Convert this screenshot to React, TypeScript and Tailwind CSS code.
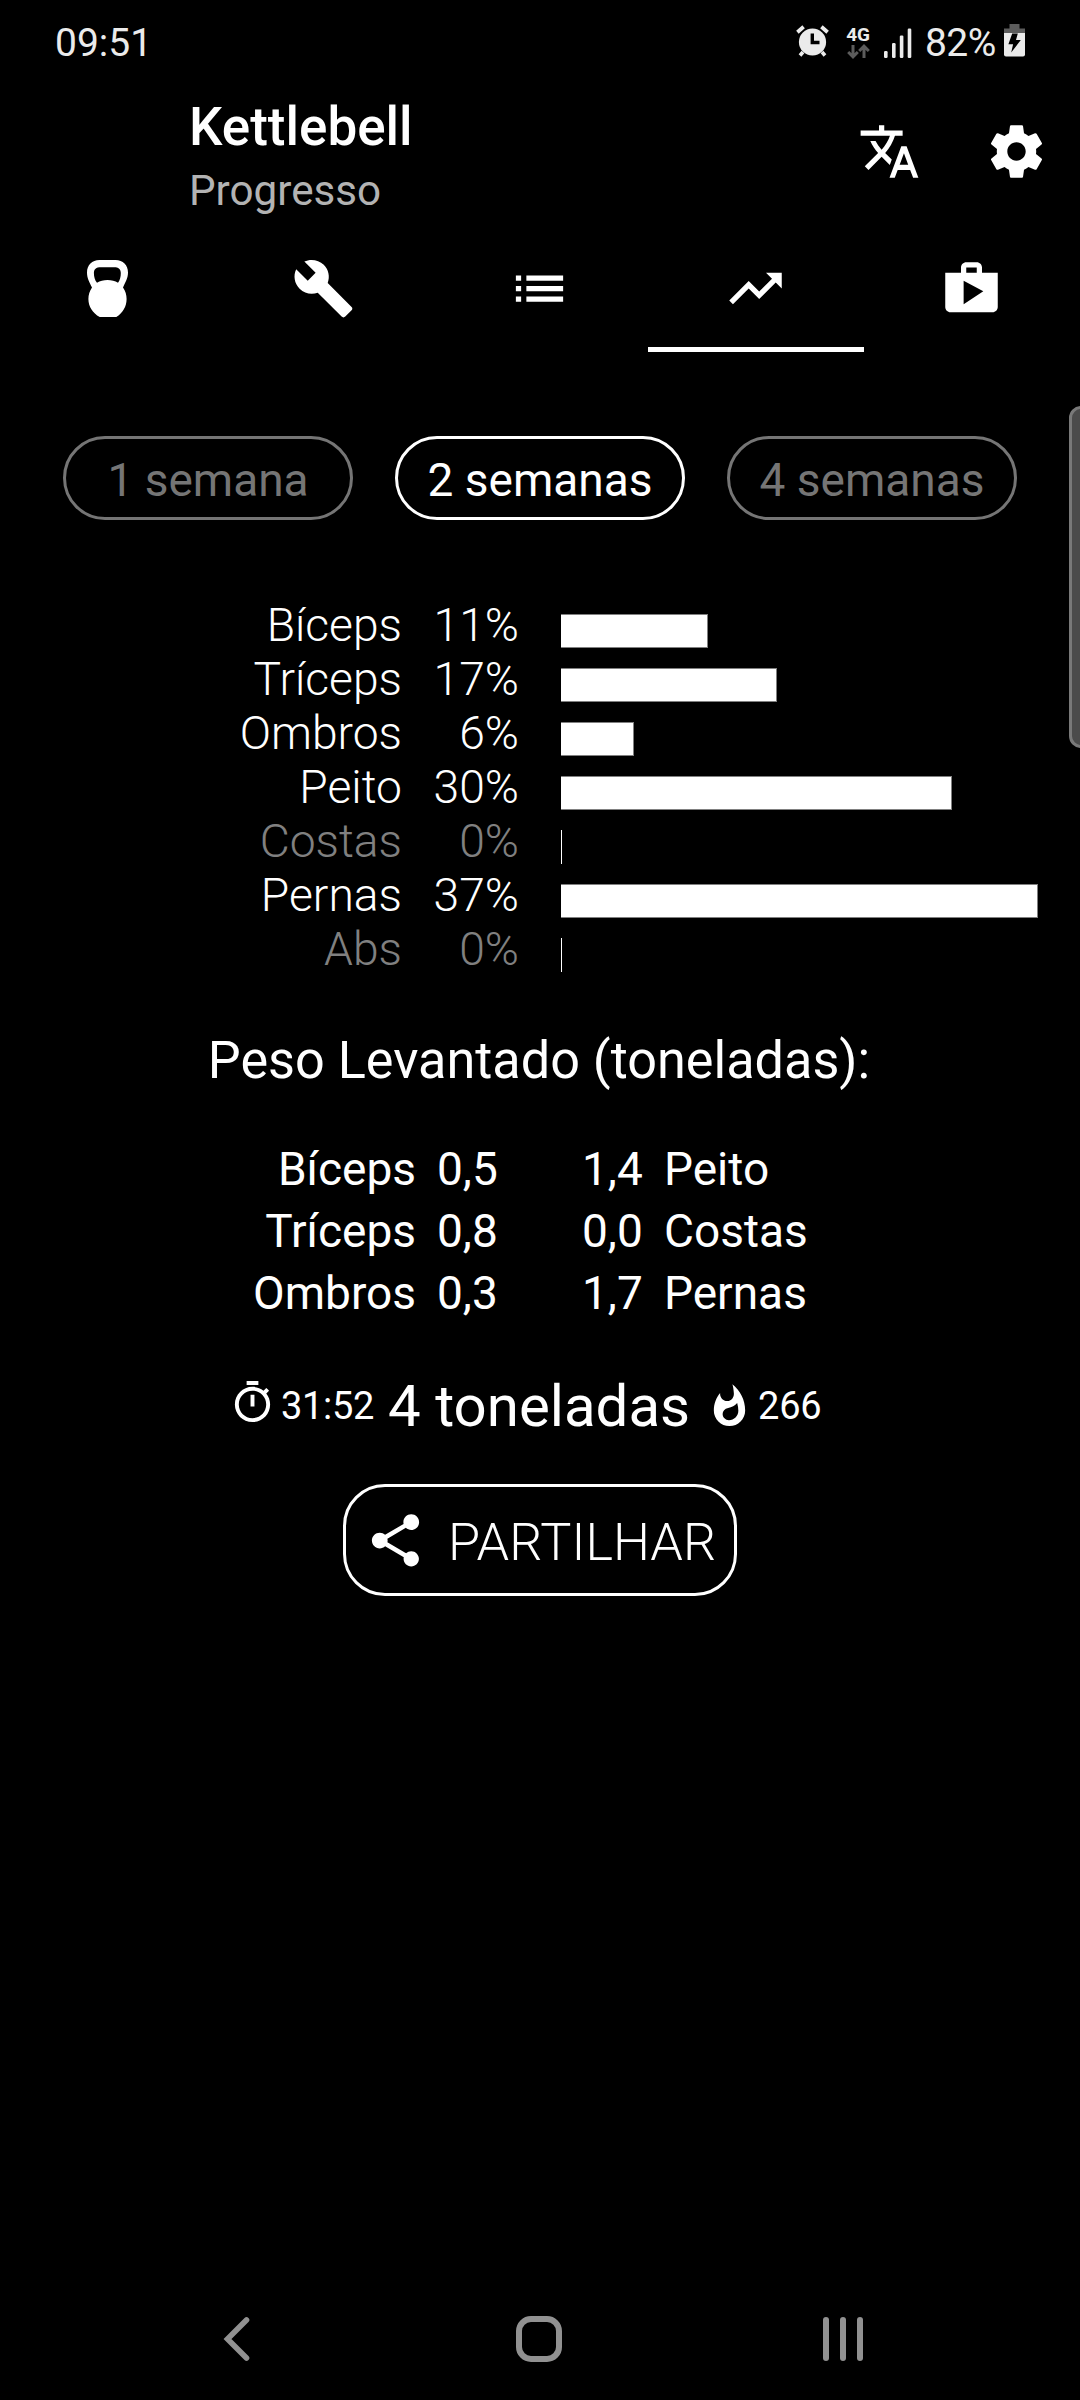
import { MdBuild, MdList, MdShare, MdTranslate, MdTrendingUp } from 'react-icons/md';

const PERIODS = [
  { label: '1 semana', active: false },
  { label: '2 semanas', active: true },
  { label: '4 semanas', active: false },
];

// width is the length of the bar in px
const MUSCLES = [
  { name: 'Bíceps', percent: 11, width: 147 },
  { name: 'Tríceps', percent: 17, width: 216 },
  { name: 'Ombros', percent: 6, width: 73 },
  { name: 'Peito', percent: 30, width: 391 },
  { name: 'Costas', percent: 0, width: 1 },
  { name: 'Pernas', percent: 37, width: 477 },
  { name: 'Abs', percent: 0, width: 1 },
];

const WEIGHTS = [
  { left: 'Bíceps', leftValue: '0,5', rightValue: '1,4', right: 'Peito' },
  { left: 'Tríceps', leftValue: '0,8', rightValue: '0,0', right: 'Costas' },
  { left: 'Ombros', leftValue: '0,3', rightValue: '1,7', right: 'Pernas' },
];

function AlarmIcon() {
  return (
    <svg className="w-[33px] h-[32px]" viewBox="0 0 33 32" fill="none">
      <path d="M7 27l-3 3.5M26 27l3 3.5" stroke="#ebebeb" strokeWidth="3.6" />
      <path d="M1.4 7.2L7.6 1.8M31.6 7.2L25.4 1.8" stroke="#ebebeb" strokeWidth="3.8" />
      <circle cx="16.5" cy="17" r="13.6" fill="#ebebeb" />
      <path d="M16.3 8.5v9h7.2" stroke="#000" strokeWidth="3.4" />
    </svg>
  );
}

function DataArrowsIcon() {
  return (
    <svg className="w-[23px] h-[15px]" viewBox="0 0 23 15" fill="none" stroke="#5c5c5c" strokeWidth="3">
      <path d="M6 1v11M1.2 8L6 12.8 10.8 8" />
      <path d="M17 14V3M12.2 7L17 2.2 21.8 7" />
    </svg>
  );
}

function SignalIcon() {
  return (
    <svg className="w-[28px] h-[30px]" viewBox="0 0 28 30" fill="#ebebeb">
      <rect x="0" y="23" width="3.6" height="7" rx="1.2" />
      <rect x="8" y="15" width="3.6" height="15" rx="1.2" />
      <rect x="15.8" y="7.5" width="3.6" height="22.5" rx="1.2" />
      <rect x="23.7" y="0.5" width="3.6" height="29.5" rx="1.2" />
    </svg>
  );
}

function BatteryIcon() {
  return (
    <svg className="w-[21px] h-[33px]" viewBox="0 0 21 33">
      <path d="M5.5 0h10v4.5H21V10H0V4.5h5.5z" fill="#5c5c5c" />
      <path d="M0 9h21v21.5a2 2 0 01-2 2H2a2 2 0 01-2-2z" fill="#ebebeb" />
      <path d="M8.2 9.5h5.6l-1.8 6.5h4.8L7.2 28.6l1.9-8.4H4.4z" fill="#000" />
    </svg>
  );
}

function SettingsIcon() {
  return (
    <svg className="w-[63px] h-[63px]" viewBox="0 0 24 24" fill="currentColor">
      <path d="M19.43 12.98c.04-.32.07-.64.07-.98s-.03-.66-.07-.98l2.11-1.65c.19-.15.24-.42.12-.64l-2-3.46c-.12-.22-.39-.3-.61-.22l-2.49 1c-.52-.4-1.08-.73-1.69-.98l-.38-2.65C14.46 2.18 14.25 2 14 2h-4c-.25 0-.46.18-.49.42l-.38 2.65c-.61.25-1.17.59-1.69.98l-2.49-1c-.23-.09-.49 0-.61.22l-2 3.46c-.13.22-.07.49.12.64l2.11 1.65c-.04.32-.07.65-.07.98s.03.66.07.98l-2.11 1.65c-.19.15-.24.42-.12.64l2 3.46c.12.22.39.3.61.22l2.49-1c.52.4 1.08.73 1.69.98l.38 2.65c.03.24.24.42.49.42h4c.25 0 .46-.18.49-.42l.38-2.65c.61-.25 1.17-.59 1.69-.98l2.49 1c.23.09.49 0 .61-.22l2-3.46c.12-.22.07-.49-.12-.64l-2.11-1.65zM12 15.5c-1.93 0-3.5-1.57-3.5-3.5s1.57-3.5 3.5-3.5 3.5 1.57 3.5 3.5-1.57 3.5-3.5 3.5z" />
    </svg>
  );
}

function KettlebellIcon() {
  return (
    <svg className="w-[41px] h-[57px]" viewBox="0 0 41 57" fill="currentColor" fillRule="evenodd">
      <path d="M12.5 0H28.5C36 0 41 5 41 12.5C41 18.5 38.5 21.5 36 27.5C38.5 31 39.6 34.8 39.6 39C39.6 46.5 35.8 53 29.3 57H12.7C5.6 53 1.4 46.5 1.4 39C1.4 34.8 2.6 31 5 27.5C2.2 21.5 0 18.5 0 12.5C0 5 5 0 12.5 0ZM14 7.2C9 7.2 6.9 9 6.9 13C6.9 17 7.8 20 10 22.8C13 21 16.5 20 20.5 20C24.5 20 28 21 31 22.8C33 20 33.8 17 33.8 13C33.8 9 31.6 7.2 27 7.2Z" />
    </svg>
  );
}

function ShopIcon() {
  return (
    <svg className="w-[63px] h-[63px]" viewBox="0 0 24 24" fill="currentColor">
      <path d="M16 6V4c0-1.11-.89-2-2-2h-4c-1.11 0-2 .89-2 2v2H2v13c0 1.11.89 2 2 2h16c1.11 0 2-.89 2-2V6h-6zm-6-2h4v2h-4V4zM9 18V9l7.5 4L9 18z" />
    </svg>
  );
}

function TimerIcon() {
  return (
    <svg className="w-[47px] h-[47px]" viewBox="0 0 24 24" fill="currentColor">
      <path d="M15 1H9v2h6V1zm-4 13h2V8h-2v6zm8.03-6.61l1.42-1.42c-.43-.51-.9-.99-1.41-1.41l-1.42 1.42C16.07 4.74 14.12 4 12 4c-4.97 0-9 4.03-9 9s4.02 9 9 9 9-4.03 9-9c0-2.12-.74-4.07-1.97-5.61zM12 20c-3.87 0-7-3.13-7-7s3.13-7 7-7 7 3.13 7 7-3.13 7-7 7z" />
    </svg>
  );
}

function FireIcon() {
  return (
    <svg className="w-[47px] h-[47px]" viewBox="0 0 24 24" fill="currentColor">
      <path d="M13.5.67s.74 2.65.74 4.8c0 2.06-1.35 3.73-3.41 3.73-2.07 0-3.63-1.67-3.63-3.73l.03-.36C5.21 7.51 4 10.62 4 14c0 4.42 3.58 8 8 8s8-3.58 8-8C20 8.61 17.41 3.8 13.5.67zM11.71 19c-1.78 0-3.22-1.4-3.22-3.14 0-1.62 1.05-2.76 2.81-3.12 1.77-.36 3.6-1.21 4.62-2.58.39 1.29.59 2.65.59 4.04 0 2.65-2.15 4.8-4.8 4.8z" />
    </svg>
  );
}

function StatusBar() {
  return (
    <div className="h-[86px] flex items-center justify-between pl-[55px] pr-[55px] text-[39px] leading-none text-[#ebebeb]">
      <span>09:51</span>
      <div className="flex items-center">
        <div className="pb-[4px]">
          <AlarmIcon />
        </div>
        <div className="ml-[17px] flex flex-col items-center pb-[3px]">
          <span className="text-[19px] leading-[19px] font-bold">4G</span>
          <DataArrowsIcon />
        </div>
        <div className="ml-[14px]">
          <SignalIcon />
        </div>
        <span className="ml-[13px] w-[79px] tracking-[-0.6px]">82%</span>
        <div className="pb-[5px]">
          <BatteryIcon />
        </div>
      </div>
    </div>
  );
}

function Header() {
  return (
    <header className="h-[140px] pl-[189px] pr-8 flex items-center justify-between">
      <div className="flex flex-col gap-1 pt-[6px]">
        <h1 className="text-[53px] leading-[60px] font-medium">Kettlebell</h1>
        <p className="text-[42.2px] leading-[60px] text-[#b3b3b3]">Progresso</p>
      </div>
      <div className="flex gap-16 pb-[9px]">
        <MdTranslate className="w-[63px] h-[63px]" />
        <SettingsIcon />
      </div>
    </header>
  );
}

function Tabs() {
  return (
    <nav className="grid grid-cols-5 h-[126px]">
      <button className="flex items-center justify-center pr-px pb-[2px]">
        <KettlebellIcon />
      </button>
      <button className="flex items-center justify-center pr-[2px] pb-[2px]">
        <MdBuild className="w-[63px] h-[63px]" />
      </button>
      <button className="flex items-center justify-center pr-[2px] pb-[2px]">
        <MdList className="w-[63px] h-[63px]" />
      </button>
      <button className="relative flex items-center justify-center pr-[2px] pb-[2px]">
        <MdTrendingUp className="w-[63px] h-[63px]" />
        <span className="absolute bottom-0 left-0 w-full h-[5px] bg-white" />
      </button>
      <button className="flex items-center justify-center pr-[2px] pb-[2px]">
        <ShopIcon />
      </button>
    </nav>
  );
}

function NavigationBar() {
  return (
    <div className="h-[122px] flex items-center justify-between pl-[223px] pr-[217px] text-[#919191]">
      <svg className="w-[32px] h-[46px]" viewBox="0 0 32 46" fill="none" stroke="currentColor" strokeWidth="5.6" strokeLinecap="round">
        <path d="M23.5 4L4.5 23 23.5 42" strokeLinejoin="miter" />
      </svg>
      <span className="w-[46px] h-[46px] rounded-[15px] border-[6px] border-[#919191]" />
      <span className="flex gap-[11px]">
        <span className="w-[6px] h-[44px] rounded-full bg-[#919191]" />
        <span className="w-[6px] h-[44px] rounded-full bg-[#919191]" />
        <span className="w-[6px] h-[44px] rounded-full bg-[#919191]" />
      </span>
    </div>
  );
}

export default function App() {
  return (
    <div className="relative w-[1080px] h-[2400px] overflow-hidden bg-black text-white font-[Roboto,sans-serif] flex flex-col">
      <StatusBar />
      <Header />
      <Tabs />

      <main className="flex-1 flex flex-col">
        <div className="mt-[84px] flex justify-center gap-[42px]">
          {PERIODS.map((period) => (
            <button
              key={period.label}
              className={`w-[290px] h-[84px] pt-[3px] rounded-full border-[3px] text-[46px] leading-none ${
                period.active ? 'border-white text-white' : 'border-[#757575] text-[#757575]'
              }`}
            >
              {period.label}
            </button>
          ))}
        </div>

        <div className="mt-[78px] text-[46.2px] leading-[54px] font-light">
          {MUSCLES.map((muscle) => (
            <div key={muscle.name} className="h-[54px] flex">
              <span className={`w-[402px] text-right ${muscle.percent === 0 ? 'text-[#808080]' : ''}`}>
                {muscle.name}
              </span>
              <span className={`w-[117px] text-right ${muscle.percent === 0 ? 'text-[#808080]' : ''}`}>
                {muscle.percent}%
              </span>
              <span
                className={`ml-[42px] mt-4 h-[34px] bg-white ${
                  muscle.percent === 0 ? '' : 'border-y border-r border-[#808080]'
                }`}
                style={{ width: muscle.width }}
              />
            </div>
          ))}
        </div>

        <h2 className="mt-[50px] pr-[2px] text-[52.2px] leading-[70px] text-center">Peso Levantado (toneladas):</h2>

        <div className="mt-[42px] text-[46px] leading-[62px]">
          {WEIGHTS.map((row) => (
            <div key={row.left} className="flex">
              <span className="w-[416px] text-right">{row.left}</span>
              <span className="ml-[21px] w-[61px]">{row.leftValue}</span>
              <span className="ml-[84px] w-[61px]">{row.rightValue}</span>
              <span className="ml-[21px]">{row.right}</span>
            </div>
          ))}
        </div>

        <div className="mt-[47px] h-[70px] pl-[229px] flex items-center text-[38px] leading-none">
          <div className="pb-[7px]">
            <TimerIcon />
          </div>
          <span className="ml-[5px] w-[107px] tracking-[-0.3px]">31:52</span>
          <span className="w-[318px] text-[58.2px]">4 toneladas</span>
          <FireIcon />
          <span className="ml-[5px] tracking-[-0.2px]">266</span>
        </div>

        <button className="mt-[43px] self-center w-[394px] h-[112px] pl-[18px] flex items-center rounded-[42px] border-[3px] border-white text-[52.2px] leading-none font-light">
          <MdShare className="w-[63px] h-[63px]" />
          <span className="ml-[21px] pt-[6px]">PARTILHAR</span>
        </button>
      </main>

      <NavigationBar />

      {/* edge panel handle */}
      <div className="absolute left-[1069px] top-[406px] w-[30px] h-[342px] rounded-[12px] border-[3px] border-[#797979] bg-[#4b4b4b]" />
    </div>
  );
}
